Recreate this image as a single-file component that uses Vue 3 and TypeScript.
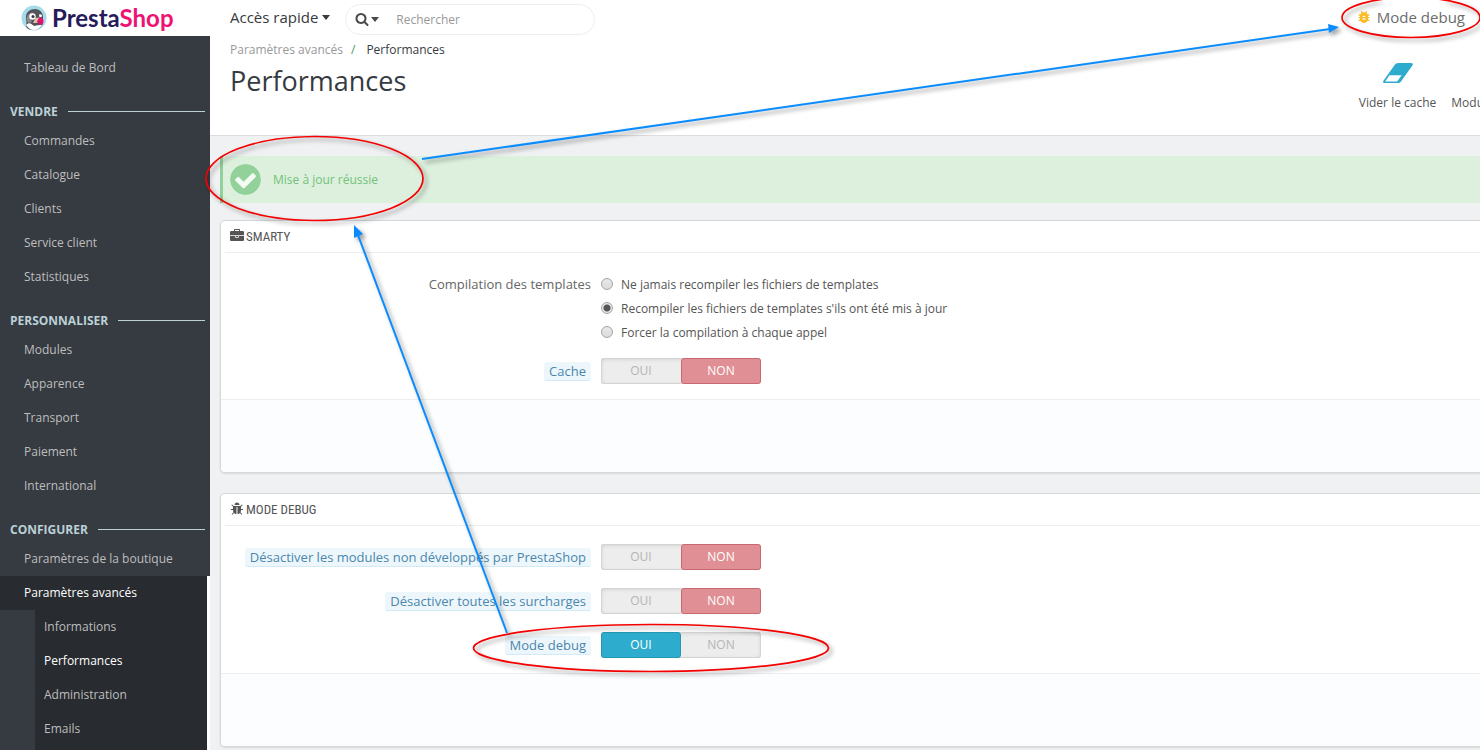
<script setup lang="ts">
import { ref } from 'vue'

interface MenuItem {
  label: string
  active?: boolean
  children?: { label: string; active?: boolean }[]
}

interface MenuSection {
  title: string
  items: MenuItem[]
}

interface SwitchOption {
  id: string
  label: string
  on: boolean
}

const sections: MenuSection[] = [
  {
    title: 'VENDRE',
    items: [
      { label: 'Commandes' },
      { label: 'Catalogue' },
      { label: 'Clients' },
      { label: 'Service client' },
      { label: 'Statistiques' },
    ],
  },
  {
    title: 'PERSONNALISER',
    items: [
      { label: 'Modules' },
      { label: 'Apparence' },
      { label: 'Transport' },
      { label: 'Paiement' },
      { label: 'International' },
    ],
  },
  {
    title: 'CONFIGURER',
    items: [
      { label: 'Paramètres de la boutique' },
      {
        label: 'Paramètres avancés',
        active: true,
        children: [
          { label: 'Informations' },
          { label: 'Performances', active: true },
          { label: 'Administration' },
          { label: 'Emails' },
        ],
      },
    ],
  },
]

const templateModes = [
  'Ne jamais recompiler les fichiers de templates',
  "Recompiler les fichiers de templates s'ils ont été mis à jour",
  'Forcer la compilation à chaque appel',
]
const templateMode = ref(1)

const smartySwitches = ref<SwitchOption[]>([{ id: 'cache', label: 'Cache', on: false }])
const debugSwitches = ref<SwitchOption[]>([
  { id: 'modules', label: 'Désactiver les modules non développés par PrestaShop', on: false },
  { id: 'overrides', label: 'Désactiver toutes les surcharges', on: false },
  { id: 'debug', label: 'Mode debug', on: true },
])
</script>

<template>
  <div class="app">
    <aside class="sidebar">
      <a href="#" class="logo" aria-label="PrestaShop">
        <svg class="logo-mark" viewBox="0 0 26 26" aria-hidden="true">
          <circle cx="13" cy="13" r="12.500" fill="#a4dbe8" />
          <path d="M5 21C6 18 5 15 5 12C5 7 9 4 14 4C19 4 22 8 22 12L22 18C21 22 17 25 13 25C9 25 6 24 5 21Z" fill="#54525a" />
          <path d="M5 20C8 17 10 18 13 21C16 20 18 20 21 20C19 23 16 25 13 25C10 25 7 23 5 20Z" fill="#fff" />
          <path d="M6 12C7 8 10 7 13 8C10 10 9 13 11 17L7 18C6 16 5 14 6 12Z" fill="#8b898f" />
          <circle cx="11.500" cy="11.500" r="3.200" fill="#fff" />
          <circle cx="12" cy="11.500" r="1.500" fill="#35343f" />
          <path d="M18 9.500A2 2 0 0 1 21 11.500L18.500 12.500Z" fill="#fff" />
          <path d="M14.500 13L18.500 12.500L17 18L12 18Z" fill="#e0c3a0" />
          <path d="M18 12.500C21 12 23 14 22.500 17C22 19.500 20 20.500 18.500 19.500C18.500 18 17 17.500 15.500 17.500Z" fill="#e3106d" />
        </svg>
        <span class="logo-text">Presta<span class="pink">Shop</span></span>
      </a>
      <nav class="menu" aria-label="Menu principal">
        <a href="#" class="item first">Tableau de Bord</a>
        <template v-for="section in sections" :key="section.title">
          <div class="section-title">{{ section.title }}</div>
          <template v-for="item in section.items" :key="item.label">
            <a href="#" class="item" :class="{ active: item.active }">{{ item.label }}</a>
            <div v-if="item.children" class="submenu">
              <a
                v-for="child in item.children"
                :key="child.label"
                href="#"
                class="subitem"
                :class="{ current: child.active }"
              >{{ child.label }}</a>
            </div>
          </template>
        </template>
      </nav>
    </aside>

    <div class="main">
      <header class="header">
        <div class="topbar">
          <button type="button" class="quick">Accès rapide<span class="caret"></span></button>
          <form class="search" role="search" @submit.prevent>
            <button type="button" class="search-kind" aria-label="Type de recherche">
              <svg viewBox="0 0 1792 1792" class="search-icon" aria-hidden="true">
                <path fill="currentColor" d="M1216 832q0-185-131.5-316.5t-316.5-131.5-316.5 131.5-131.5 316.5 131.5 316.5 316.5 131.5 316.5-131.5 131.5-316.5zm512 832q0 52-38 90t-90 38q-54 0-90-38l-343-342q-179 124-399 124-143 0-273.5-55.5t-225-150-150-225-55.5-273.5 55.5-273.5 150-225 225-150 273.5-55.5 273.5 55.5 225 150 150 225 55.5 273.5q0 220-124 399l343 343q37 37 37 90z" />
              </svg>
              <span class="caret"></span>
            </button>
            <input type="text" placeholder="Rechercher" aria-label="Rechercher" />
          </form>
          <a href="#" class="debug-link">
            <svg viewBox="0 0 24 24" aria-hidden="true">
              <path fill="#fbbb22" d="M20 8h-2.81c-.45-.78-1.07-1.45-1.82-1.96L17 4.41 15.59 3l-2.17 2.17C12.96 5.06 12.49 5 12 5c-.49 0-.96.06-1.41.17L8.41 3 7 4.41l1.62 1.63C7.88 6.55 7.26 7.22 6.81 8H4v2h2.09c-.05.33-.09.66-.09 1v1H4v2h2v1c0 .34.04.67.09 1H4v2h2.81c1.04 1.79 2.97 3 5.19 3s4.15-1.21 5.19-3H20v-2h-2.09c.05-.33.09-.66.09-1v-1h2v-2h-2v-1c0-.34-.04-.67-.09-1H20V8zm-6 8h-4v-2h4v2zm0-4h-4v-2h4v2z" />
            </svg>
            Mode debug
          </a>
        </div>
        <div class="page-head">
          <div class="titles">
            <nav class="breadcrumb" aria-label="Fil d'Ariane">
              <a href="#">Paramètres avancés</a><span class="slash">/</span><span>Performances</span>
            </nav>
            <h1>Performances</h1>
          </div>
          <div class="toolbar">
            <a href="#" class="tool">
              <svg viewBox="0 0 32 22" aria-hidden="true">
                <path fill="#2eacce" fill-rule="evenodd" d="M16 1H29Q32 1 30.400 3.600L19 19.500Q18 21 16 21H3Q0 21 1.600 18.400L13 2.500Q14 1 16 1ZM7.500 13.200L3.200 19.400H15.200L19.600 13.200Z" />
              </svg>
              Vider le cache
            </a>
            <a href="#" class="tool">Modu</a>
          </div>
        </div>
      </header>

      <main class="content">
        <div class="alert" role="status">
          <svg viewBox="128 128 1536 1536" aria-hidden="true">
            <path fill="#93d19a" d="M1412 734q0-28-18-46l-91-90q-19-19-45-19t-45 19l-408 407-226-226q-19-19-45-19t-45 19l-91 90q-18 18-18 46 0 27 18 45l362 362q19 19 45 19 27 0 46-19l543-543q18-18 18-45zm252 162q0 209-103 385.500t-279.500 279.500-385.500 103-385.500-103-279.500-279.500-103-385.500 103-385.500 279.500-279.500 385.500-103 385.500 103 279.500 279.500 103 385.500z" />
          </svg>
          Mise à jour réussie
        </div>

        <section class="panel">
          <h2>
            <svg viewBox="0 0 1792 1792" aria-hidden="true">
              <path fill="currentColor" d="M640 256h512v-128h-512v128zm1152 640v480q0 66-47 113t-113 47h-1472q-66 0-113-47t-47-113v-480h672v160q0 26 19 45t45 19h320q26 0 45-19t19-45v-160h672zm-768 0v128h-256v-128h256zm768-480v384h-1792v-384q0-66 47-113t113-47h352v-160q0-40 28-68t68-28h576q40 0 68 28t28 68v160h352q66 0 113 47t47 113z" />
            </svg>
            SMARTY
          </h2>
          <div class="form smarty">
            <div class="row top" role="radiogroup" aria-labelledby="tpl-label">
              <div class="label-cell"><span id="tpl-label" class="plain">Compilation des templates</span></div>
              <div class="radios">
                <label v-for="(mode, i) in templateModes" :key="mode">
                  <input v-model="templateMode" type="radio" name="template-mode" :value="i" />
                  {{ mode }}
                </label>
              </div>
            </div>
            <div v-for="s in smartySwitches" :key="s.id" class="row" role="radiogroup" :aria-labelledby="s.id">
              <div class="label-cell"><span :id="s.id" class="hint">{{ s.label }}</span></div>
              <div class="switch">
                <label :class="{ yes: s.on }"><input v-model="s.on" type="radio" :name="s.id" :value="true" />OUI</label>
                <label :class="{ no: !s.on }"><input v-model="s.on" type="radio" :name="s.id" :value="false" />NON</label>
              </div>
            </div>
          </div>
          <div class="panel-footer"></div>
        </section>

        <section class="panel">
          <h2>
            <svg viewBox="0 0 1792 1792" aria-hidden="true">
              <path fill="currentColor" d="M1696 960q0 26-19 45t-45 19h-224q0 171-67 290l208 209q19 19 19 45t-19 45q-18 19-45 19t-45-19l-198-197q-5 5-15 13t-42 28.500-65 36.500-82 29-97 13v-896h-128v896q-51 0-101.500-13.500t-87-33-66-39-43.500-32.500l-15-14-183 207q-20 21-48 21-24 0-43-16-19-18-20.500-44.500t15.500-46.500l202-227q-58-114-58-274h-224q-26 0-45-19t-19-45 19-45 45-19h224v-294l-173-173q-19-19-19-45t19-45 45-19 45 19l173 173h844l173-173q19-19 45-19t45 19 19 45-19 45l-173 173v294h224q26 0 45 19t19 45zm-480-576h-640q0-133 93.500-226.500t226.500-93.500 226.500 93.500 93.500 226.500z" />
            </svg>
            MODE DEBUG
          </h2>
          <div class="form">
            <div v-for="s in debugSwitches" :key="s.id" class="row" role="radiogroup" :aria-labelledby="s.id">
              <div class="label-cell"><span :id="s.id" class="hint">{{ s.label }}</span></div>
              <div class="switch">
                <label :class="{ yes: s.on }"><input v-model="s.on" type="radio" :name="s.id" :value="true" />OUI</label>
                <label :class="{ no: !s.on }"><input v-model="s.on" type="radio" :name="s.id" :value="false" />NON</label>
              </div>
            </div>
          </div>
          <div class="panel-footer"></div>
        </section>
      </main>
    </div>

    <svg class="annotations" width="1480" height="750" viewBox="0 0 1480 750" aria-hidden="true">
      <g fill="none" stroke="#f40000" stroke-width="1.700">
        <ellipse cx="314.500" cy="178.500" rx="108.500" ry="42" />
        <ellipse cx="1411" cy="17.500" rx="69" ry="20" />
        <ellipse cx="651" cy="648" rx="177.500" ry="23.500" />
      </g>
      <g stroke="#0a8cff" fill="#0a8cff">
        <path d="M422 159L1330 29" stroke-width="2" />
        <path d="M1339 27L1328 24L1329 33Z" stroke="none" />
        <path d="M507 633L358 235" stroke-width="2" />
        <path d="M354 225L354 238L363 234Z" stroke="none" />
      </g>
    </svg>
  </div>
</template>

<style>
html,
body {
  margin: 0;
  overflow: hidden;
}
</style>

<style scoped>
.app {
  position: relative;
  display: flex;
  height: 100vh;
  overflow: hidden;
  background: #eff1f2;
  font-family: "Open Sans", "Noto Sans", sans-serif;
  font-size: 12px;
  color: #363a41;
}
* {
  box-sizing: border-box;
}
a {
  color: inherit;
  text-decoration: none;
}
button,
input {
  font: inherit;
  color: inherit;
  margin: 0;
}
.sidebar {
  flex: none;
  width: 210px;
  background: #363a41;
}
.logo {
  display: flex;
  align-items: center;
  gap: 5px;
  height: 36px;
  padding: 0 0 0 21px;
  background: #fff;
}
.logo-mark {
  width: 26px;
  height: 26px;
}
.logo-text {
  font-family: Lato, sans-serif;
  font-weight: 700;
  font-size: 24px;
  line-height: 36px;
  color: #251b5b;
}
.pink {
  color: #ee1273;
}
.menu {
  display: flex;
  flex-direction: column;
  padding-top: 15px;
}
.item {
  height: 34px;
  padding-left: 24px;
  line-height: 34px;
  color: #bebebe;
}
.item.active {
  background: #282b30;
  color: #fff;
  border-right: 3px solid #fff;
}
.section-title {
  display: flex;
  align-items: center;
  gap: 10px;
  height: 39px;
  padding: 13px 5px 0 10px;
  font-weight: 700;
  color: #bbd1d7;
}
.section-title::after {
  content: "";
  flex: 1;
  height: 1px;
  background: #bbd1d7;
}
.submenu {
  display: flex;
  flex-direction: column;
  padding-left: 35px;
  border-right: 3px solid #fff;
}
.subitem {
  height: 34px;
  padding-left: 9px;
  line-height: 34px;
  background: #282b30;
  color: #bebebe;
}
.subitem:last-child {
  height: 60px;
}
.subitem.current {
  color: #fff;
}
.main {
  flex: 1;
  min-width: 0;
}
.header {
  height: 136px;
  background: #fff;
  border-bottom: 1px solid #dddddf;
}
.topbar {
  display: flex;
  align-items: center;
  height: 38px;
  padding: 0 15px 0 20px;
}
.caret {
  display: inline-block;
  border: 4px solid transparent;
  border-top: 5px solid currentColor;
  border-bottom: 0;
}
.quick {
  display: flex;
  align-items: center;
  gap: 4px;
  height: 34px;
  padding: 0;
  margin: 0 15px 4px 0;
  border: 0;
  background: none;
  font-size: 15px;
  white-space: nowrap;
}
.search {
  display: flex;
  align-items: center;
  width: 250px;
  height: 31px;
  border: 1px solid #eee;
  border-radius: 16px;
}
.search-kind {
  display: flex;
  align-items: center;
  gap: 2px;
  width: 44px;
  padding: 0 0 0 9px;
  border: 0;
  background: none;
  color: #4a4a4a;
}
.search-icon {
  width: 14px;
  height: 14px;
}
.search input {
  flex: 1;
  min-width: 0;
  padding: 0 6px;
  border: 0;
  outline: 0;
  background: none;
}
.search input::placeholder {
  color: #999;
  opacity: 1;
}
.debug-link {
  display: flex;
  align-items: center;
  gap: 5px;
  margin: 0 0 4px auto;
  font-size: 15px;
  color: #6c6c6c;
}
.debug-link svg {
  width: 16px;
  height: 16px;
}
.page-head {
  display: flex;
  justify-content: space-between;
  padding: 2px 0 0 20px;
}
.breadcrumb {
  height: 20px;
  line-height: 20px;
}
.breadcrumb a {
  color: #999;
}
.slash {
  margin: 0 11px 0 8px;
  color: #4a9a58;
}
h1 {
  margin: 0;
  font-size: 27px;
  line-height: 42px;
  font-weight: 400;
}
.toolbar {
  display: flex;
  align-items: flex-end;
  gap: 15px;
  height: 72px;
  margin-right: -4px;
  color: #555;
}
.tool {
  display: flex;
  flex-direction: column;
  align-items: center;
  gap: 10px;
  line-height: 18px;
  white-space: nowrap;
}
.tool svg {
  width: 32px;
  height: 22px;
}
.content {
  padding: 20px 0 0 10px;
}
.alert {
  display: flex;
  align-items: center;
  gap: 12px;
  height: 47px;
  margin-bottom: 17px;
  padding-left: 7px;
  border-left: 3px solid #93d19a;
  background: #ddf0de;
  color: #72c279;
}
.alert svg {
  width: 31px;
  height: 31px;
  border-radius: 50%;
  background: radial-gradient(circle, #f4faf4 0 60%, transparent 61%);
}
.panel {
  margin-bottom: 20px;
  border: 1px solid #d3d8db;
  border-right: 0;
  border-radius: 5px 0 0 5px;
  background: #fff;
  box-shadow: 0 1px 2px #0000001a;
  overflow: hidden;
}
h2 {
  display: flex;
  align-items: center;
  gap: 2px;
  height: 32px;
  margin: 0 0 0 4px;
  padding: 0 0 1px 5px;
  border-bottom: 1px solid #eee;
  font-family: "Ubuntu Condensed", "Roboto Condensed", "Open Sans Condensed", "Liberation Sans Narrow", sans-serif;
  font-size: 13px;
  font-weight: 400;
  color: #555;
}
h2 svg {
  width: 14px;
  height: 14px;
}
.form {
  display: flex;
  flex-direction: column;
  gap: 18px;
  padding: 18px 0 15px;
}
.smarty {
  gap: 14px;
  padding-top: 19px;
}
.row {
  display: grid;
  grid-template-columns: 370px 1fr;
  column-gap: 10px;
  align-items: center;
}
.row.top {
  align-items: start;
}
.label-cell {
  text-align: right;
  font-size: 13px;
  line-height: 18px;
  white-space: nowrap;
}
.plain {
  display: inline-block;
  line-height: 24px;
  color: #666;
}
.hint {
  display: inline-block;
  padding: 0 5px;
  border-bottom: 1px solid #d2eaf6;
  border-radius: 3px;
  background: #edf7fb;
  color: #4a86ad;
}
.radios label {
  display: flex;
  align-items: center;
  gap: 8px;
  height: 24px;
  color: #555;
}
.radios input {
  appearance: none;
  width: 12px;
  height: 12px;
  border: 1px solid #a5a5a5;
  border-radius: 50%;
  background: linear-gradient(#e9e9e9, #dcdcdc);
}
.radios input:checked {
  background: radial-gradient(circle, #555 0 3px, #e6e6e6 4px);
}
.switch {
  display: flex;
  width: 160px;
  height: 26px;
  border-radius: 3px;
  background: #ededed;
  box-shadow: inset 0 0 0 1px #d4d4d4, inset 0 1px 4px #00000026;
}
.switch label {
  position: relative;
  flex: 1;
  border: 1px solid transparent;
  border-radius: 3px;
  line-height: 24px;
  text-align: center;
  color: #b5b5b5;
}
.switch input {
  position: absolute;
  inset: 0;
  opacity: 0;
}
.switch .yes {
  background: #2eacce;
  border-color: #2796b4;
  color: #fff;
}
.switch .no {
  background: #e08f95;
  border-color: #c9696f;
  color: #fff;
}
.panel-footer {
  height: 73px;
  border-top: 1px solid #eee;
  background: #fcfdfe;
}
.annotations {
  position: absolute;
  top: 0;
  left: 0;
  pointer-events: none;
  filter: drop-shadow(3px 3px 2px #00000066);
}
</style>
